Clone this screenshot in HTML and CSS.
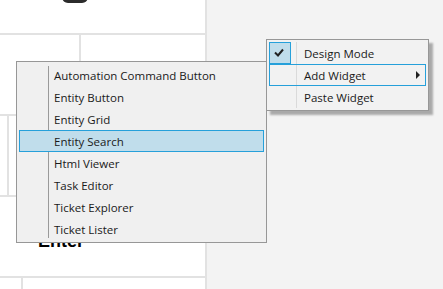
FILE: index.html
```html
<!DOCTYPE html>
<html lang="en">
<head>
  <meta charset="UTF-8" />
  <title>Design Mode Menu</title>
  <link rel="stylesheet" href="styles.css">
</head>
<body>
  <div class="board">
    <div class="strip strip-top">
      <div class="knob"></div>
    </div>
    <div class="strip strip-mid">
      <div class="cell cell-a"></div>
    </div>
    <div class="strip strip-mid">
      <div class="cell cell-b"></div>
    </div>
    <div class="strip strip-mid">
      <div class="widget-title">Enter</div>
    </div>
    <div class="strip strip-last">
      <div class="cell cell-c"></div>
    </div>
  </div>

  <div class="menu menu-main">
    <div class="item">
      <span class="icon on">
        <svg width="20" height="20" viewBox="0 0 20 20">
          <path d="M5 9.5 L8 12.5 L13 6.5" fill="none" stroke="#222" stroke-width="2"/>
        </svg>
      </span>
      <span class="label">Design Mode</span>
    </div>
    <div class="item focus">
      <span class="icon"></span>
      <span class="label">Add Widget</span>
      <span class="arrow"></span>
    </div>
    <div class="item">
      <span class="icon"></span>
      <span class="label">Paste Widget</span>
    </div>
  </div>

  <div class="menu menu-sub">
    <div class="item"><span class="icon"></span><span class="label">Automation Command Button</span></div>
    <div class="item"><span class="icon"></span><span class="label">Entity Button</span></div>
    <div class="item"><span class="icon"></span><span class="label">Entity Grid</span></div>
    <div class="item hot"><span class="icon"></span><span class="label">Entity Search</span></div>
    <div class="item"><span class="icon"></span><span class="label">Html Viewer</span></div>
    <div class="item"><span class="icon"></span><span class="label">Task Editor</span></div>
    <div class="item"><span class="icon"></span><span class="label">Ticket Explorer</span></div>
    <div class="item"><span class="icon"></span><span class="label">Ticket Lister</span></div>
  </div>
</body>
</html>
```

FILE: styles.css
```css
* {
  box-sizing: border-box;
}
body {
  margin: 0;
  width: 443px;
  height: 289px;
  overflow: hidden;
  position: relative;
  background-color: #f3f3f3;
  font-family: "Open Sans", "Noto Sans", sans-serif;
  font-size: 11.5px;
  color: #1a1a1a;
}
.board {
  width: 207px;
  height: 289px;
  background-color: #fff;
  border-right: 2px solid #e2e2e2;
  overflow: hidden;
}
.strip {
  display: flex;
  border-bottom: 2px solid #e2e2e2;
}
.strip-top {
  height: 35px;
}
.strip-mid {
  height: 81px;
}
.strip-last {
  height: 40px;
  border-bottom: none;
}
.cell {
  border-right: 2px solid #e2e2e2;
}
.cell-a {
  width: 81px;
}
.cell-b {
  width: 9px;
}
.cell-c {
  width: 23px;
}
.knob {
  width: 26px;
  height: 12px;
  margin: -9px 0 0 62px;
  background-color: #2b2b2b;
  border-radius: 0 0 6px 6px;
}
.widget-title {
  padding: 34px 0 0 38px;
  font-family: "Liberation Sans", Arial, sans-serif;
  font-weight: bold;
  font-size: 18px;
  line-height: 20px;
  color: #000;
}
.menu {
  position: absolute;
  padding: 2px;
  border: 1px solid #979797;
  background-color: #f2f2f2;
}
.menu::before {
  content: "";
  position: absolute;
  width: 1px;
}
.menu-main {
  left: 266px;
  top: 39px;
  width: 163px;
  box-shadow: 4px 4px 2px rgba(0, 0, 0, 0.3);
}
.menu-main::before {
  left: 29px;
  top: 2px;
  bottom: 2px;
  background-color: #dadada;
}
.menu-sub {
  left: 16px;
  top: 61px;
  width: 251px;
  background-color: #f0f0f0;
}
.menu-sub::before {
  left: 31px;
  top: 4px;
  bottom: 4px;
  background-color: #9a9a9a;
}
.item {
  display: flex;
  align-items: center;
  height: 22px;
  position: relative;
}
.item.hot {
  background-color: #c0ddeb;
  box-shadow: inset 0 0 0 1px #26a0da;
}
.item.focus {
  box-shadow: inset 0 0 0 1px #26a0da;
}
.icon {
  flex: none;
  display: flex;
  align-items: center;
  justify-content: center;
  width: 22px;
  height: 22px;
}
.icon.on {
  background-color: #c0ddeb;
  box-shadow: inset 0 0 0 1px #26a0da;
}
.label {
  margin-left: 13px;
  white-space: nowrap;
}
.arrow {
  margin: 0 6px 0 auto;
  width: 0;
  height: 0;
  border-left: 4px solid #222;
  border-top: 4px solid transparent;
  border-bottom: 4px solid transparent;
}
```
